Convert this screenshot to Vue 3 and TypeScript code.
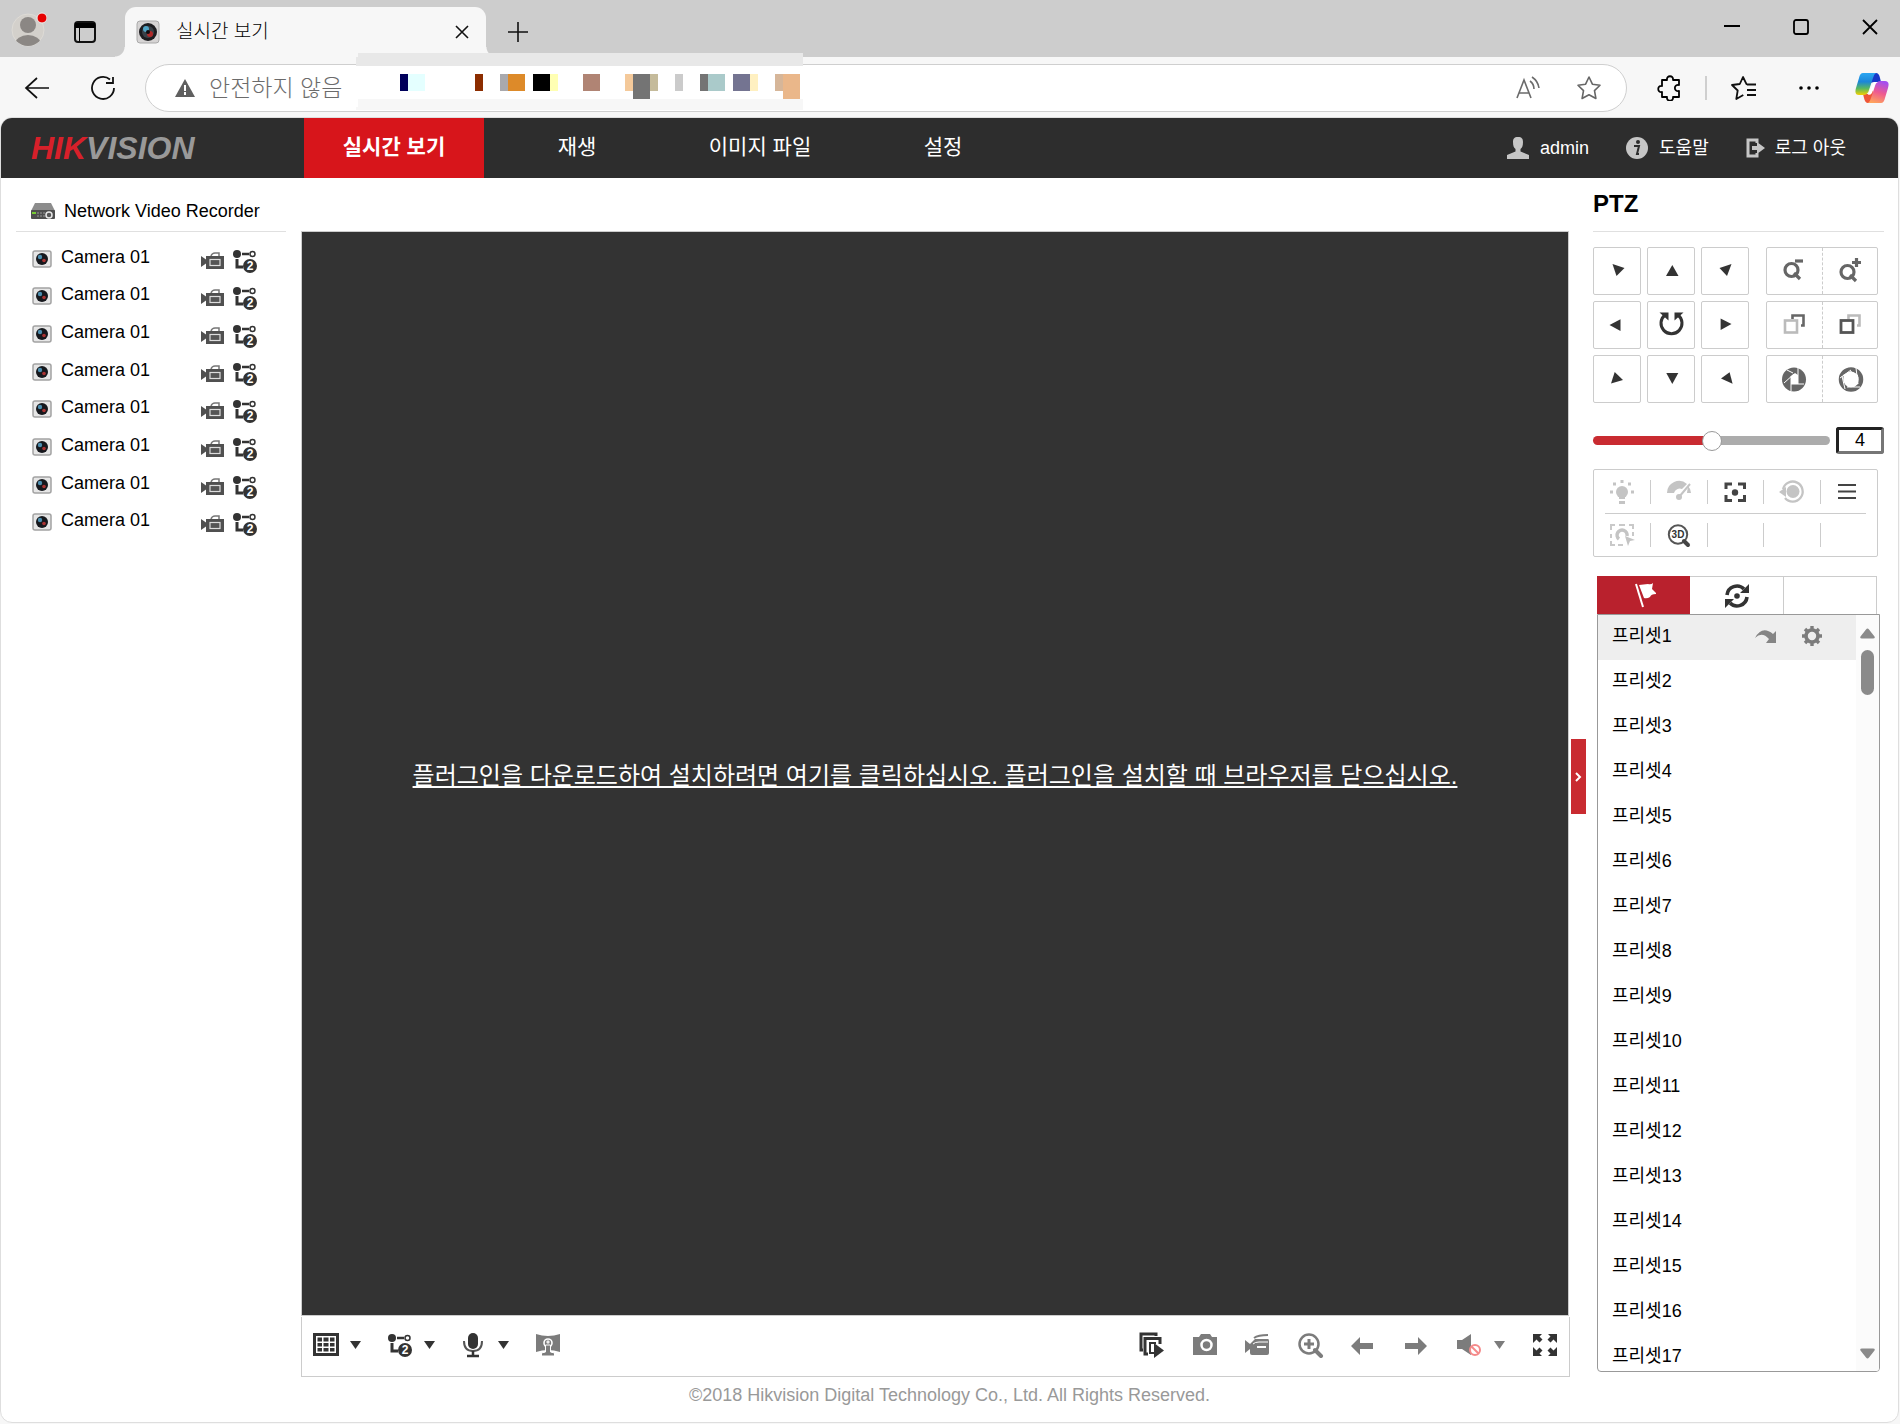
<script setup lang="ts">
import { computed, h, ref } from 'vue'

interface Glyph {
  w: number
  h: number
  body: string
}

const glyphs: Record<string, Glyph> = {
  avatar: { w: 36, h: 40, body: '<defs><clipPath id="av"><circle cx="17" cy="22" r="16"/></clipPath></defs><circle cx="17" cy="22" r="16" fill="#d3d0cb" stroke="#dedbd6"/><g clip-path="url(#av)" fill="#8b8784"><circle cx="17" cy="17" r="8"/><ellipse cx="17" cy="36" rx="13" ry="9"/></g><circle cx="31" cy="10" r="5" fill="#e60000" stroke="#eee"/>' },
  tabs: { w: 24, h: 24, body: '<rect x="2" y="2" width="20" height="20" rx="3" fill="none" stroke="#111" stroke-width="2"/><path d="M2 3h20v5H2zM6 8h1v14H6z" fill="#000"/>' },
  lens: { w: 24, h: 24, body: '<rect x="1" y="1" width="22" height="22" rx="3" fill="#d6d4d4" stroke="#aaa"/><circle cx="12" cy="12" r="9" fill="#1d1d20"/><circle cx="12" cy="12" r="6" fill="#3a4148"/><circle cx="10" cy="9" r="3" fill="#4fa3c4"/><circle cx="14" cy="14" r="3" fill="#b02a2a"/><circle cx="12" cy="12" r="2" fill="#0c0c10"/>' },
  close: { w: 16, h: 16, body: '<path d="M2 2l12 12M14 2L2 14" stroke="#111" stroke-width="1.6"/>' },
  plus: { w: 22, h: 22, body: '<path d="M11 1v20M1 11h20" stroke="#111" stroke-width="1.6"/>' },
  minimize: { w: 16, h: 16, body: '<path d="M0 7h16" stroke="#000" stroke-width="2"/>' },
  maximize: { w: 16, h: 16, body: '<rect x="1" y="1" width="14" height="14" rx="2" fill="none" stroke="#000" stroke-width="1.8"/>' },
  exit: { w: 16, h: 16, body: '<path d="M1 1l14 14M15 1L1 15" stroke="#000" stroke-width="1.8"/>' },
  back: { w: 26, h: 24, body: '<path d="M13 2L2 12l11 10M2 12h23" fill="none" stroke="#111" stroke-width="1.7"/>' },
  reload: { w: 26, h: 26, body: '<path d="M24 13a11 11 0 1 1-4-8.500M23 2v6h-7" fill="none" stroke="#111" stroke-width="1.8"/>' },
  warn: { w: 20, h: 18, body: '<path d="M10 0l10 18H0z" fill="#5f5f5f"/><path d="M10 6v6M10 13v3" stroke="#fff" stroke-width="2"/>' },
  read: { w: 26, h: 24, body: '<g fill="none" stroke="#6b6b6b" stroke-width="1.6"><path d="M2 22L9 4l7 18M4 17h10"/><path d="M15 5q4 3 4 8M17 1q6 4 7 11"/></g>' },
  star: { w: 26, h: 26, body: '<path d="M13 2l3.400 7.200 7.600 1-5.500 5.400 1.400 7.900L13 19.700l-6.900 3.800 1.400-7.900L2 10.200l7.600-1z" fill="none" stroke="#666" stroke-width="1.6" stroke-linejoin="round"/>' },
  puzzle: { w: 26, h: 26, body: '<path d="M5 5h5c-.8-5 6.800-5 6 0h6v5c-5.500-1-5.500 7 0 6v6h-6c.8 5-6.800 5-6 0H5v-5c-5 .8-5-6.800 0-6z" fill="none" stroke="#000" stroke-width="1.8" stroke-linejoin="round"/>' },
  favorites: { w: 26, h: 26, body: '<path d="M17 9.500l-1.500-.3L12 2 8.800 9 1 10l5.700 5.500L5.300 24l7-4M16 9.500h9M16 15h9M16 20h9" fill="none" stroke="#111" stroke-width="1.8" stroke-linejoin="round"/>' },
  dots: { w: 24, h: 6, body: '<circle cx="4" cy="3" r="1.8"/><circle cx="12" cy="3" r="1.8"/><circle cx="20" cy="3" r="1.8"/>' },
  copilot: { w: 34, h: 30, body: '<defs><linearGradient id="ca" x1="0" y1="0" x2="0" y2="1"><stop offset="0" stop-color="#2aa6f2"/><stop offset=".4" stop-color="#1b86d8"/><stop offset=".7" stop-color="#58b860"/><stop offset="1" stop-color="#f4d000"/></linearGradient><linearGradient id="cb" x1="0.600" y1="0" x2="0.300" y2="1"><stop offset="0" stop-color="#a44df0"/><stop offset=".5" stop-color="#ee5a90"/><stop offset="1" stop-color="#ffa45c"/></linearGradient></defs><path d="M16 0h5q3 0 4 5l1 4h-7l-4 1z" fill="#1738c8"/><path d="M18 30h-5q-3 0-4-5l-1-4h7l3-4z" fill="#ee5638"/><path d="M8 0h13q-2 1-3 5l-4 12q-1 5-6 5H4q-5 0-3-7l3-10q1-5 4-5z" fill="url(#ca)"/><path d="M26 30H13q2-1 3-5l4-12q1-5 6-5h4q5 0 3 7l-3 10q-1 5-4 5z" fill="url(#cb)"/><path d="M19 9h4q-3 1-4 5l-2 6q-1 2-4 2 1-1 2-5z" fill="#fff"/>' },
  user: { w: 24, h: 24, body: '<path d="M12 1c4 0 5 2 5 5 0 4-1 6-2.500 7v2.500L23 19v4H1v-4l8.500-3.500V13C8 12 7 10 7 6c0-3 1-5 5-5z" fill="#c6c6c6"/>' },
  info: { w: 24, h: 24, body: '<circle cx="12" cy="12" r="11" fill="#c6c6c6"/><circle cx="13" cy="6" r="2" fill="#2d2d2d"/><path d="M9 10h5l-2 8h2" fill="none" stroke="#2d2d2d" stroke-width="2"/>' },
  logout: { w: 20, h: 22, body: '<path d="M12 6V3H3v16h9v-3" fill="none" stroke="#c6c6c6" stroke-width="3"/><path d="M7 9h5V5l8 6-8 6v-4H7z" fill="#c6c6c6"/>' },
  recorder: { w: 24, h: 20, body: '<path d="M4 2h16l4 8H0z" fill="#8c8c8c"/><rect y="9" width="24" height="9" rx="1" fill="#4e4e4e"/><path d="M1 11h4v2H1z" fill="#7c3"/><path d="M6 12h8M6 15h8" stroke="#999" stroke-dasharray="2 1"/><circle cx="18" cy="14" r="3" fill="#555" stroke="#e8e8e8" stroke-width="1.500"/>' },
  cam: { w: 20, h: 18, body: '<rect x="1" y="1" width="18" height="16" rx="2" fill="#e6e6e6" stroke="#a3a3a3" stroke-width="1.500"/><circle cx="10" cy="9" r="6" fill="#16181d"/><circle cx="8" cy="7" r="2.200" fill="#4d8fb0"/><circle cx="12" cy="10.500" r="1.800" fill="#a33"/>' },
  camcorder: { w: 24, h: 20, body: '<path d="M0 5l5 3.500v4L0 16z" fill="#505050"/><path d="M10 5q1-3 4-3h4v3" fill="none" stroke="#777" stroke-width="1.500"/><rect x="5" y="5" width="18" height="13" fill="#505050"/><rect x="9" y="8.500" width="10" height="6" fill="#555" stroke="#ddd" stroke-width="1.200"/>' },
  stream: { w: 26, h: 24, body: '<circle cx="5" cy="5" r="4" fill="#333"/><path d="M10 5h7" stroke="#333" stroke-width="2.500"/><circle cx="20.500" cy="5" r="2.500" fill="none" stroke="#333" stroke-width="1.500"/><path d="M5 10v8h6" fill="none" stroke="#333" stroke-width="3"/><circle cx="18" cy="17" r="7" fill="#333"/><text x="18" y="21" text-anchor="middle" font-family="Liberation Sans" font-weight="700" font-size="12" fill="#fff">2</text>' },
  caret: { w: 11, h: 8, body: '<path d="M0 0h11L5.500 8z" fill="currentColor"/>' },
  grid: { w: 26, h: 24, body: '<rect width="26" height="23" fill="#333"/><rect x="3" y="3" width="20" height="17" fill="#fff"/><path d="M4.500 4.500h4.500v4H4.500zM10.500 4.500h5v4h-5zM17 4.500h4.500v4H17zM4.500 10h4.500v3.500H4.500zM10.500 10h5v3.500h-5zM17 10h4.500v3.500H17zM4.500 15h4.500v3.500H4.500zM10.500 15h5v3.500h-5zM17 15h4.500v3.500H17z" fill="#333"/>' },
  mic: { w: 26, h: 26, body: '<rect x="7" y="1" width="10" height="16" rx="5" fill="#333"/><path d="M3 9q0 10 9 10t9-10" fill="none" stroke="#555" stroke-width="2"/><path d="M12 19v4M6 24h12" stroke="#333" stroke-width="2.500"/>' },
  fisheye: { w: 26, h: 24, body: '<path d="M1 1q12 4 24 0v18q-12-4-24 0z" fill="#7c7c7c"/><circle cx="13" cy="10" r="4" fill="#7c7c7c" stroke="#fff" stroke-width="1.600"/><circle cx="13" cy="9" r="1.700" fill="#eee"/><path d="M10.500 12h5v7l4 1v3h-13v-3l4-1z" fill="#7c7c7c" stroke="#fff" stroke-width="1"/>' },
  play: { w: 26, h: 26, body: '<path d="M4 18H2V2h15v2" fill="none" stroke="#333" stroke-width="3"/><path d="M9 22H6V6.500h15V12" fill="none" stroke="#333" stroke-width="3"/><path d="M15 21h-4V11h6" fill="none" stroke="#333" stroke-width="2"/><path d="M15 11l10 7.500L15 26z" fill="#333"/>' },
  photo: { w: 26, h: 24, body: '<path d="M2 4h5l2-3h9l2 3h5v18H1V4z" fill="#7c7c7c"/><circle cx="14.500" cy="12" r="5" fill="#7c7c7c" stroke="#fff" stroke-width="2.500"/>' },
  record: { w: 26, h: 24, body: '<path d="M0 7l5 4v5l-5 4z" fill="#7c7c7c"/><path d="M9 5q4-3 14-3" fill="none" stroke="#7c7c7c" stroke-width="2"/><path d="M5 11l5-5h13q1 0 1 2v12q0 2-2 2H7q-2 0-2-2z" fill="#7c7c7c"/><path d="M8 11q2-2 6-2h9" fill="none" stroke="#fff" stroke-width="1"/><path d="M12 14h9" stroke="#fff" stroke-width="2"/>' },
  zoom: { w: 26, h: 26, body: '<circle cx="11" cy="12" r="9.500" fill="none" stroke="#7c7c7c" stroke-width="2.500"/><path d="M6 12h10M11 7v10" stroke="#7c7c7c" stroke-width="3"/><path d="M17 18l6 6" stroke="#7c7c7c" stroke-width="4" stroke-linecap="round"/>' },
  prev: { w: 26, h: 24, body: '<path d="M0 13l9-9v6h13v6H9v6z" fill="#7c7c7c"/>' },
  next: { w: 26, h: 24, body: '<path d="M23 13l-9-9v6H1v6h13v6z" fill="#7c7c7c"/>' },
  mute: { w: 26, h: 26, body: '<path d="M0 8h5l9-6v21l-9-6H0z" fill="#7c7c7c"/><circle cx="18" cy="18" r="5" fill="#fff" stroke="#f58a8a" stroke-width="2"/><path d="M14.500 14.500l7 7" stroke="#f58a8a" stroke-width="2"/>' },
  full: { w: 26, h: 26, body: '<path d="M1 2h9L7.500 4.500l3 3-3 3-3-3L1 11zM25 2h-9l2.500 2.500-3 3 3 3 3-3L25 11zM1 24h9l-2.500-2.500 3-3-3-3-3 3L1 15zM25 24h-9l2.500-2.500-3-3 3-3 3 3L25 15z" fill="#333"/>' },
  nw: { w: 48, h: 48, body: '<path d="M19.500 17l12 4-8 8z" fill="#333"/>' },
  n: { w: 48, h: 48, body: '<path d="M19 29h12.500L25.300 18z" fill="#333"/>' },
  ne: { w: 48, h: 48, body: '<path d="M18.500 21l12-4L26 29z" fill="#333"/>' },
  w: { w: 48, h: 48, body: '<path d="M16.500 24l11-5.700V30z" fill="#333"/>' },
  auto: { w: 48, h: 48, body: '<path d="M18 14a10.500 10.500 0 1 0 13 0" fill="none" stroke="#333" stroke-width="3"/><path d="M12.500 11.500h9v8zM36.500 11.500h-9v8z" fill="#333"/>' },
  e: { w: 48, h: 48, body: '<path d="M19.600 17.500v11.500L30.500 23z" fill="#333"/>' },
  sw: { w: 48, h: 48, body: '<path d="M18 28.500l3.700-11.500 8.300 8z" fill="#333"/>' },
  s: { w: 48, h: 48, body: '<path d="M19.300 18h12L25.300 29z" fill="#333"/>' },
  se: { w: 48, h: 48, body: '<path d="M20 23.500l8.600-6.200 3 11.500z" fill="#333"/>' },
  zoomOut: { w: 55, h: 46, body: '<circle cx="24.500" cy="22" r="6.500" fill="none" stroke="#666" stroke-width="3.200"/><path d="M27 25l6 6" stroke="#666" stroke-width="3.200"/><path d="M28 13h8" stroke="#666" stroke-width="3.200"/>' },
  zoomIn: { w: 55, h: 46, body: '<circle cx="24.500" cy="24" r="6.500" fill="none" stroke="#666" stroke-width="3.200"/><path d="M27 27l6 6" stroke="#666" stroke-width="3.200"/><path d="M29 14.500h9M33.500 10v9" stroke="#666" stroke-width="3.200"/>' },
  focusNear: { w: 55, h: 46, body: '<path d="M25.500 17v-3.500h11v10H34" fill="none" stroke="#666" stroke-width="2.600"/><rect x="18" y="18.500" width="12" height="12" fill="#fff" stroke="#bbb" stroke-width="2.600"/>' },
  focusFar: { w: 55, h: 46, body: '<path d="M25.500 17v-3.500h11v10H34" fill="none" stroke="#bbb" stroke-width="2.600"/><rect x="18" y="18.500" width="12" height="12" fill="#fff" stroke="#555" stroke-width="2.800"/>' },
  irisClose: { w: 55, h: 46, body: '<circle cx="27" cy="23.500" r="12" fill="#666"/><path d="M24 20l4-3 3 2v9h-7z" fill="#fff"/><path d="M31 11v17M37 28H24M24 35V20M17 27l10-9M20 14l6 3" stroke="#fff" stroke-width="1"/>' },
  irisOpen: { w: 55, h: 46, body: '<circle cx="28" cy="23.500" r="10" fill="none" stroke="#666" stroke-width="4.500"/><path d="M20 19l8-4 7 4v9l-4 3h-6z" fill="#fff"/><path d="M33 12l2 16M37 31H24M22 33l-3-13M17 22l11-8" stroke="#fff" stroke-width="1"/>' },
  light: { w: 26, h: 26, body: '<circle cx="13" cy="13" r="6" fill="#c4c4c4"/><path d="M10 17h6v3h-6zM10 22h6v3h-6zM11.500 1h3v3h-3zM1 11.500h3v3H1zM22 11.500h3v3h-3zM4 3.500h3v3H4zM19 3.500h3v3h-3z" fill="#c4c4c4"/>' },
  wiper: { w: 26, h: 26, body: '<path d="M1 14a12 12 0 0 1 20-9l-5 5a6 6 0 0 0-8 4zM22 7q3 3 3 7h-4z" fill="#c4c4c4"/><circle cx="13" cy="18" r="3" fill="#c4c4c4"/><path d="M13 18L24 5" stroke="#c4c4c4" stroke-width="2"/>' },
  focus: { w: 26, h: 26, body: '<path d="M4 10V5H10M16 5h6.500V10M22.500 16v5.500H16M10 21.500H4V16" fill="none" stroke="#444" stroke-width="3"/><circle cx="13" cy="13.500" r="3.200" fill="#444"/>' },
  init: { w: 26, h: 26, body: '<circle cx="14" cy="12.500" r="6.500" fill="#c4c4c4"/><path d="M6 19a10 10 0 1 0-2-9" fill="none" stroke="#c4c4c4" stroke-width="2.300"/><path d="M0 13l7-5v10z" fill="#c4c4c4"/>' },
  menu: { w: 26, h: 26, body: '<path d="M2 6h18M2 12.500h18M2 19h18" stroke="#444" stroke-width="2"/>' },
  track: { w: 26, h: 26, body: '<path d="M2 8V3h4M10 3h6M20 3h4v4M2 12v4M2 19v4h4M9 23h5M24 10v4" fill="none" stroke="#c9c9c9" stroke-width="2"/><path d="M10 17a5 5 0 1 1 8-3" fill="none" stroke="#c4c4c4" stroke-width="3.500"/><path d="M16 14l10 4-5 1-2 5z" fill="#c4c4c4"/>' },
  zoom3d: { w: 26, h: 26, body: '<circle cx="12" cy="12.500" r="9.200" fill="#fff" stroke="#555" stroke-width="2"/><path d="M18 19l4 4" stroke="#444" stroke-width="4" stroke-linecap="round"/><text x="12" y="16" text-anchor="middle" font-family="Liberation Sans" font-weight="700" font-size="10" fill="#333">3D</text>' },
  flag: { w: 22, h: 26, body: '<path d="M2 2l7 23" stroke="#fff" stroke-width="2"/><path d="M5 3l9-1q3 1 5-1l-1 6 5 5q-6 0-7 3-3 2-6 1z" fill="#fff"/>' },
  patrol: { w: 26, h: 26, body: '<g fill="none" stroke="#333" stroke-width="3.600"><path d="M3 12A10 10 0 0 1 20 6"/><path d="M23 14A10 10 0 0 1 6 20"/></g><path d="M25 1v9h-9zM1 25v-9h9z" fill="#333"/><circle cx="13" cy="13" r="2.800" fill="#333"/>' },
  call: { w: 24, h: 16, body: '<path d="M1 10Q8-3 19 6l3-3v12H12l3-4Q8 3 1 10z" fill="#858585"/>' },
  gear: { w: 22, h: 22, body: '<circle cx="11" cy="11" r="6" fill="none" stroke="#7c7c7c" stroke-width="3.600"/><path d="M11 1v4M11 17v4M1 11h4M17 11h4M4 4l3 3M15 15l3 3M18 4l-3 3M7 15l-3 3" stroke="#7c7c7c" stroke-width="3.400"/>' },
  scroll: { w: 15, h: 11, body: '<path d="M6 1.500q1.500-2 3 0l5.500 7q1 2-1.500 2H2q-2.500 0-1.500-2z" fill="#8a8a8a"/>' },
  chevron: { w: 8, h: 14, body: '<path d="M1 3l4 4-4 4" fill="none" stroke="#fff" stroke-width="2"/>' }
}

const Icon = (props: { name: string }) => {
  const g = glyphs[props.name]
  return h('svg', {
    width: g.w,
    height: g.h,
    viewBox: `0 0 ${g.w} ${g.h}`,
    'aria-hidden': 'true',
    innerHTML: g.body
  })
}

// x, width, height, colour of each block over the hidden address
const blocks: [number, number, number, string][] = [
  [44, 8, 17, '#00005b'], [52, 17, 17, '#e4ffff'], [119, 8, 17, '#8c2d00'],
  [144, 8, 17, '#a9a9ad'], [152, 17, 17, '#dd8a29'], [177, 17, 17, '#000000'],
  [194, 8, 17, '#ffffb3'], [227, 17, 17, '#b08474'], [269, 8, 17, '#f4c99a'],
  [277, 17, 25, '#747474'], [294, 8, 17, '#c5bb9b'], [319, 8, 17, '#cbcbcb'],
  [344, 8, 17, '#747474'], [352, 17, 17, '#aacaca'], [377, 17, 17, '#747491'],
  [394, 8, 17, '#fff0c1'], [419, 8, 17, '#d6b699'], [427, 17, 25, '#eab78a']
]

const menus = ['실시간 보기', '재생', '이미지 파일', '설정']
const activeMenu = ref('실시간 보기')
const cameras = Array.from({ length: 8 }, (_, i) => ({ id: i, name: 'Camera 01' }))

const directions = ['nw', 'n', 'ne', 'w', 'auto', 'e', 'sw', 's', 'se']
const lensPairs = [['zoomOut', 'zoomIn'], ['focusNear', 'focusFar'], ['irisClose', 'irisOpen']]
const tools = [['light', 'wiper', 'focus', 'init', 'menu'], ['track', 'zoom3d', '', '', '']]

const speed = ref(4)
const sliderFill = computed(() => {
  const p = ((speed.value - 1) / 6) * 100
  return { background: `linear-gradient(to right, #c92b31 ${p}%, #acacac ${p}%)` }
})

const presets = Array.from({ length: 17 }, (_, i) => `프리셋${i + 1}`)
const selected = ref(0)

const leftTools = ['grid', 'stream', 'mic']
const rightTools = ['play', 'photo', 'record', 'zoom', 'prev', 'next']
</script>

<template>
  <div class="window">
    <div class="tabstrip">
      <button class="avatar" aria-label="Profile"><Icon name="avatar" /></button>
      <button class="tablist" aria-label="Tabs"><Icon name="tabs" /></button>
      <div class="tab">
        <Icon name="lens" />
        <span class="tab-title">실시간 보기</span>
        <button aria-label="Close tab"><Icon name="close" /></button>
      </div>
      <button class="newtab" aria-label="New tab"><Icon name="plus" /></button>
      <div class="controls">
        <button aria-label="Minimize"><Icon name="minimize" /></button>
        <button aria-label="Maximize"><Icon name="maximize" /></button>
        <button aria-label="Close"><Icon name="exit" /></button>
      </div>
    </div>

    <div class="toolbar">
      <button aria-label="Back"><Icon name="back" /></button>
      <button class="reload" aria-label="Reload"><Icon name="reload" /></button>
      <div class="address">
        <Icon name="warn" />
        <span class="insecure">안전하지 않음</span>
        <button aria-label="Read aloud"><Icon name="read" /></button>
        <button aria-label="Add to favorites"><Icon name="star" /></button>
      </div>
      <div class="extras">
        <button aria-label="Extensions"><Icon name="puzzle" /></button>
        <span class="sep"></span>
        <button aria-label="Favorites"><Icon name="favorites" /></button>
        <button class="more" aria-label="More"><Icon name="dots" /></button>
        <button aria-label="Copilot"><Icon name="copilot" /></button>
      </div>
      <svg class="mosaic" width="447" height="57" viewBox="0 0 447 57" aria-hidden="true">
        <path d="M2 0h445v13H0V4h2z" fill="#e8e8e8" />
        <rect y="13" width="447" height="33" fill="#fff" />
        <path d="M2 46h445v11H0v-3h2z" fill="#f7f7f7" />
        <rect v-for="b in blocks" :key="b[0]" :x="b[0]" y="21" :width="b[1]" :height="b[2]" :fill="b[3]" />
      </svg>
    </div>

    <div class="page">
      <header class="nav">
        <a class="logo" href="#"><span>HIK</span>VISION</a>
        <nav>
          <a v-for="m in menus" :key="m" href="#" :class="{ active: m === activeMenu }" @click.prevent="activeMenu = m">{{ m }}</a>
        </nav>
        <div class="account">
          <a href="#"><Icon name="user" />admin</a>
          <a href="#"><Icon name="info" />도움말</a>
          <a href="#"><Icon name="logout" />로그 아웃</a>
        </div>
      </header>

      <main>
        <aside class="devices">
          <h2><Icon name="recorder" />Network Video Recorder</h2>
          <ul>
            <li v-for="c in cameras" :key="c.id">
              <Icon name="cam" class="low" />
              <span class="name">{{ c.name }}</span>
              <div class="marks">
                <button aria-label="Record"><Icon name="camcorder" /></button>
                <button aria-label="Sub stream"><Icon name="stream" /></button>
              </div>
            </li>
          </ul>
        </aside>

        <section class="viewer">
          <div class="screen"><a href="#">플러그인을 다운로드하여 설치하려면 여기를 클릭하십시오. 플러그인을 설치할 때 브라우저를 닫으십시오.</a></div>
          <div class="actions">
            <button v-for="t in leftTools" :key="t" class="drop" :aria-label="t"><Icon :name="t" /><Icon name="caret" /></button>
            <button aria-label="fisheye"><Icon name="fisheye" /></button>
            <span class="spacer"></span>
            <button v-for="t in rightTools" :key="t" class="tight" :aria-label="t"><Icon :name="t" /></button>
            <button class="drop muted tight" aria-label="Sound"><Icon name="mute" /><Icon name="caret" /></button>
            <button class="tight" aria-label="Full screen"><Icon name="full" /></button>
          </div>
        </section>

        <button class="handle" aria-label="Collapse"><Icon name="chevron" /></button>

        <aside class="ptz">
          <h2>PTZ</h2>
          <div class="pad">
            <div class="arrows">
              <button v-for="d in directions" :key="d" :aria-label="d"><Icon :name="d" /></button>
            </div>
            <div class="lens">
              <div v-for="p in lensPairs" :key="p[0]" class="pair">
                <button v-for="b in p" :key="b" :aria-label="b"><Icon :name="b" /></button>
              </div>
            </div>
          </div>
          <div class="speed">
            <input v-model.number="speed" type="range" min="1" max="7" aria-label="Speed" :style="sliderFill" />
            <input v-model="speed" type="text" aria-label="Speed value" />
          </div>
          <div class="tools">
            <div v-for="(row, r) in tools" :key="r" class="tool-row">
              <div v-for="(t, i) in row" :key="i" class="tool">
                <button v-if="t" :aria-label="t"><Icon :name="t" /></button>
              </div>
            </div>
          </div>
          <div class="tabs">
            <button class="on" aria-label="Preset"><Icon name="flag" /></button>
            <button aria-label="Patrol"><Icon name="patrol" /></button>
            <button aria-label="Pattern"></button>
          </div>
          <div class="presets">
            <ul>
              <li v-for="(p, i) in presets" :key="p" :class="{ sel: i === selected }" @click="selected = i">
                <span>{{ p }}</span>
                <template v-if="i === selected">
                  <button aria-label="Call"><Icon name="call" /></button>
                  <button aria-label="Set"><Icon name="gear" /></button>
                </template>
              </li>
            </ul>
            <div class="track">
              <Icon name="scroll" />
              <div class="thumb"></div>
              <Icon name="scroll" class="down" />
            </div>
          </div>
        </aside>
      </main>

      <footer>©2018 Hikvision Digital Technology Co., Ltd. All Rights Reserved.</footer>
    </div>
  </div>
</template>

<style>
body {
  background: #f7f7f7;
}
</style>

<style scoped>
* {
  box-sizing: border-box;
}
.window {
  display: flex;
  flex-direction: column;
  height: 100vh;
  background: #f7f7f7;
  color: #000;
  font: 18px/24px "Liberation Sans", "Noto Sans CJK KR", sans-serif;
}
svg {
  display: block;
  flex: none;
}
button {
  display: flex;
  align-items: center;
  justify-content: center;
  flex: none;
  margin: 0;
  padding: 0;
  border: 0;
  background: none;
  color: #333;
  font: inherit;
}
a {
  color: inherit;
  text-decoration: none;
}
ul {
  margin: 0;
  padding: 0;
  list-style: none;
}
h2 {
  margin: 0;
}

/* Tab strip */
.tabstrip {
  display: flex;
  align-items: center;
  height: 57px;
  padding: 7px 22px 0 11px;
  background: #cdcdcd;
}
.tablist {
  margin: 0 28px 0 26px;
}
.avatar {
  margin-bottom: 9px;
}
.tab {
  position: relative;
  display: flex;
  align-items: center;
  width: 361px;
  height: 50px;
  padding: 0 16px 0 11px;
  border-radius: 11px 11px 0 0;
  background: #f7f7f7;
}
.tab::before,
.tab::after {
  content: "";
  position: absolute;
  bottom: 0;
  width: 10px;
  height: 10px;
}
.tab::before {
  left: -10px;
  background: radial-gradient(circle at 0 0, #cdcdcd 9px, #f7f7f7 10px);
}
.tab::after {
  right: -10px;
  background: radial-gradient(circle at 100% 0, #cdcdcd 9px, #f7f7f7 10px);
}
.tab-title {
  flex: 1;
  padding-left: 16px;
  font-size: 19px;
  font-weight: 300;
}
.newtab {
  margin-left: 21px;
}
.controls {
  display: flex;
  gap: 53px;
  margin: 0 0 10px auto;
}

/* Address row */
.toolbar {
  position: relative;
  display: flex;
  align-items: center;
  height: 60px;
  padding: 2px 11px 0 24px;
}
.reload {
  margin: 0 29px 0 40px;
}
.address {
  display: flex;
  flex: 1;
  align-items: center;
  gap: 35px;
  height: 48px;
  padding: 0 24px 0 29px;
  border: 1px solid #cfcfcf;
  border-radius: 24px;
  background: #fff;
}
.insecure {
  flex: 1;
  margin-left: -21px;
  color: #6b6b6b;
  font-size: 23px;
  font-weight: 300;
}
.extras {
  display: flex;
  align-items: center;
  gap: 22px;
  margin-left: 30px;
}
.sep {
  width: 2px;
  height: 24px;
  margin-right: 2px;
  background: #cfcfcf;
}
.more {
  margin: 0 12px 0 18px;
}
.mosaic {
  position: absolute;
  left: 356px;
  top: -4px;
}

/* Page */
.page {
  display: flex;
  flex: 1;
  flex-direction: column;
  min-height: 0;
  margin: 0 1px 1px 0;
  overflow: hidden;
  border: 1px solid #dedede;
  border-radius: 12px;
  background: #fff;
}
.nav {
  display: flex;
  align-items: stretch;
  height: 60px;
  padding-right: 52px;
  background: #2d2d2d;
  color: #fff;
  line-height: 60px;
}
.logo {
  width: 303px;
  padding-left: 30px;
  color: #999;
  font-size: 32px;
  font-style: italic;
  font-weight: 700;
}
.logo span {
  color: #d7202a;
}
nav {
  display: flex;
  gap: 3px;
  font-size: 21px;
  line-height: 58px;
}
nav a {
  width: 180px;
  text-align: center;
}
nav a.active {
  background: #d7151b;
  font-weight: 700;
}
.account {
  display: flex;
  gap: 36px;
  margin-left: auto;
}
.account a {
  display: flex;
  align-items: center;
  gap: 10px;
}
main {
  display: grid;
  flex: 1;
  grid-template-columns: 285px minmax(0, 1fr) 23px 291px;
  min-height: 0;
  padding: 0 14px 0 15px;
}
.devices {
  width: 270px;
}
.devices h2 {
  display: flex;
  align-items: center;
  gap: 9px;
  height: 54px;
  padding: 12px 0 0 15px;
  border-bottom: 1px solid #e0e0e0;
  font-size: 18px;
  font-weight: 400;
}
.devices ul {
  display: flex;
  flex-direction: column;
  height: 307px;
  padding-top: 6px;
}
.devices li {
  display: flex;
  flex: 1;
  align-items: center;
  gap: 9px;
  padding: 0 28px 0 16px;
}
.name {
  flex: 1;
}
.marks {
  display: flex;
  gap: 7px;
  margin-top: 8px;
}
.low {
  margin-top: 4px;
}
.viewer {
  display: flex;
  flex-direction: column;
  padding-top: 53px;
}
.screen {
  display: flex;
  flex: 1;
  align-items: center;
  justify-content: center;
  margin: 0 1px 1px 0;
  padding-top: 4px;
  border: 1px solid #ccc;
  background: #333;
  color: #fff;
  font-size: 24px;
}
.screen a {
  text-decoration: underline;
  text-decoration-thickness: 2px;
  text-underline-offset: 2px;
}
.actions {
  display: flex;
  align-items: center;
  gap: 26px;
  height: 60px;
  padding: 0 11px 3px;
  border: 1px solid #ccc;
  border-top: 0;
}
.spacer {
  flex: 1;
}
.drop {
  gap: 11px;
}
.tight + .tight {
  margin-left: 1px;
}
.muted {
  color: #7c7c7c;
}
.handle {
  align-self: center;
  width: 15px;
  height: 75px;
  margin: 0 0 2px 1px;
  background: #c92b31;
}

/* PTZ panel */
.ptz {
  display: flex;
  flex-direction: column;
  min-height: 0;
  padding-bottom: 5px;
}
.ptz h2 {
  height: 54px;
  border-bottom: 1px solid #e0e0e0;
  font-size: 24px;
  line-height: 52px;
}
.pad {
  display: flex;
  gap: 17px;
  margin-top: 15px;
}
.arrows {
  display: grid;
  grid-template-columns: repeat(3, 48px);
  gap: 6px;
}
.arrows button,
.pair {
  height: 48px;
  overflow: hidden;
  border: 1px solid #ccc;
  border-radius: 2px;
}
.lens {
  display: grid;
  gap: 6px;
}
.pair {
  display: flex;
  width: 112px;
}
.pair button {
  width: 55px;
}
.pair button + button {
  border-left: 1px dashed #ccc;
}
.speed {
  display: flex;
  align-items: center;
  gap: 6px;
  margin-top: 24px;
}
.speed input[type="range"] {
  width: 237px;
  height: 9px;
  margin: 0;
  border-radius: 5px;
  appearance: none;
}
.speed input[type="range"]::-webkit-slider-thumb {
  width: 20px;
  height: 20px;
  border: 1px solid #999;
  border-radius: 50%;
  background: #fff;
  appearance: none;
}
.speed input[type="text"] {
  width: 48px;
  height: 27px;
  padding: 0;
  border: 3px solid;
  border-color: #222 #767676 #767676 #222;
  border-radius: 3px;
  font: inherit;
  text-align: center;
}
.tools {
  width: 285px;
  height: 88px;
  margin-top: 15px;
  border: 1px solid #ccc;
  border-radius: 2px;
}
.tool-row {
  position: relative;
  display: flex;
  align-items: center;
  height: 43px;
}
.tool-row + .tool-row::before {
  content: "";
  position: absolute;
  top: 0;
  left: 11px;
  right: 11px;
  border-top: 1px solid #ccc;
}
.tool {
  display: flex;
  flex: 1;
  align-items: center;
  justify-content: center;
  height: 24px;
}
.tool + .tool {
  border-left: 1px solid #ccc;
}
.tabs {
  display: grid;
  grid-template-columns: 93px 94px 93px;
  height: 38px;
  margin: 19px 0 0 4px;
}
.tabs button {
  border: 1px solid #ccc;
  border-width: 1px 1px 0 0;
}
.tabs .on {
  padding-left: 3px;
  border: 0;
  background: #b9212d;
}
.presets {
  display: flex;
  flex: 1 1 0;
  min-height: 0;
  width: 283px;
  margin-left: 4px;
  overflow: hidden;
  border: 1px solid #999;
  border-radius: 0 0 4px 4px;
}
.presets ul {
  flex: 1;
  overflow-y: auto;
  scrollbar-width: none;
}
.presets li {
  display: flex;
  align-items: center;
  gap: 23px;
  height: 45px;
  padding: 0 33px 3px 14px;
}
.presets li span {
  flex: 1;
}
.presets .sel {
  background: #eee;
}
.track {
  display: flex;
  flex-direction: column;
  align-items: center;
  width: 23px;
  padding: 13px 0 12px;
  background: #fbfbfb;
}
.thumb {
  width: 13px;
  height: 45px;
  margin: 11px 0 auto;
  border-radius: 7px;
  background: #8a8a8a;
}
.down {
  transform: rotate(180deg);
}
footer {
  height: 45px;
  color: #999;
  line-height: 36px;
  text-align: center;
}
</style>
